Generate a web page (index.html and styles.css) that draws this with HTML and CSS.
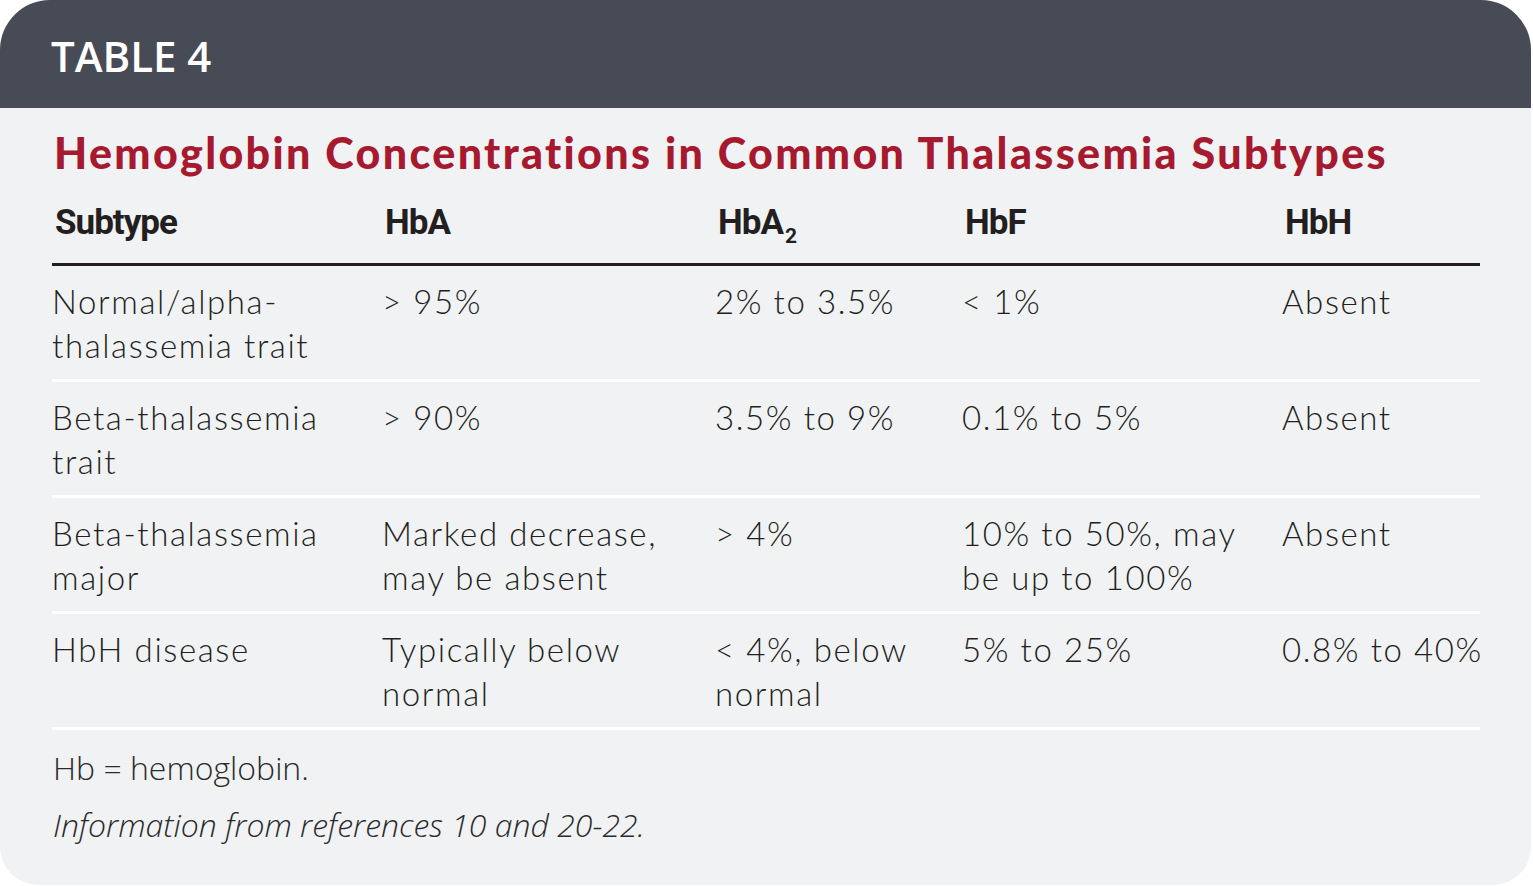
FILE: index.html
```html
<!DOCTYPE html>
<html lang="en">
<head>
<meta charset="utf-8">
<title>Table 4</title>
<link rel="stylesheet" href="styles.css">
</head>
<body>
<div class="card">
  <div class="card-head">TABLE 4</div>
  <div class="card-body">
    <h1 class="title">Hemoglobin Concentrations in Common Thalassemia Subtypes</h1>
    <div class="grid">
      <div class="row head">
        <div class="cell">Subtype</div>
        <div class="cell">HbA</div>
        <div class="cell">HbA<sub>2</sub></div>
        <div class="cell">HbF</div>
        <div class="cell">HbH</div>
      </div>
      <div class="row">
        <div class="cell">Normal/alpha-<br>thalassemia trait</div>
        <div class="cell">&gt; 95%</div>
        <div class="cell">2% to 3.5%</div>
        <div class="cell">&lt; 1%</div>
        <div class="cell">Absent</div>
      </div>
      <div class="row">
        <div class="cell">Beta-thalassemia<br>trait</div>
        <div class="cell">&gt; 90%</div>
        <div class="cell">3.5% to 9%</div>
        <div class="cell">0.1% to 5%</div>
        <div class="cell">Absent</div>
      </div>
      <div class="row">
        <div class="cell">Beta-thalassemia<br>major</div>
        <div class="cell">Marked decrease,<br>may be absent</div>
        <div class="cell">&gt; 4%</div>
        <div class="cell">10% to 50%, may<br>be up to 100%</div>
        <div class="cell">Absent</div>
      </div>
      <div class="row">
        <div class="cell">HbH disease</div>
        <div class="cell">Typically below<br>normal</div>
        <div class="cell">&lt; 4%, below<br>normal</div>
        <div class="cell">5% to 25%</div>
        <div class="cell">0.8% to 40%</div>
      </div>
    </div>
    <p class="note">Hb = hemoglobin.</p>
    <p class="note source">Information from references 10 and 20-22.</p>
  </div>
</div>
</body>
</html>
```

FILE: styles.css
```css
html, body {
  margin: 0;
  padding: 0;
  background: #ffffff;
}

.card {
  width: 1531px;
  height: 885px;
  background: #f1f2f4;
  border-radius: 50px 50px 38px 38px;
  overflow: hidden;
}

.card-head {
  height: 108px;
  background: #474b55;
  color: #ffffff;
  display: flex;
  align-items: center;
  padding-left: 51px;
  padding-top: 2px;
  box-sizing: border-box;
  font-family: "Open Sans", "DejaVu Sans", sans-serif;
  font-weight: 600;
  font-size: 42px;
  letter-spacing: 0;
}

.card-body {
  padding: 0 51px 0 52px;
}

.title {
  margin: 20px 0 0 2px;
  font-family: Lato, "DejaVu Sans", sans-serif;
  font-weight: 900;
  font-size: 43px;
  line-height: 50px;
  color: #a6192e;
  letter-spacing: 2.35px;
  white-space: nowrap;
}

.grid {
  margin-top: 25px;
}

.row {
  display: grid;
  grid-template-columns: 330px 333px 247px 320px 198px;
  height: 116px;
  box-sizing: border-box;
  padding-top: 13px;
  border-bottom: 3px solid #ffffff;
  font-family: Lato, "DejaVu Sans", sans-serif;
  font-weight: 300;
  font-size: 33px;
  line-height: 44px;
  letter-spacing: 1.6px;
  color: #231f20;
}

.row.head {
  height: 63px;
  padding-top: 0;
  border-bottom: 3px solid #231f20;
  font-family: Roboto, "DejaVu Sans Condensed", sans-serif;
  font-weight: 700;
  font-size: 35px;
  line-height: 40px;
  letter-spacing: -1px;
}

.row.head .cell {
  padding-left: 3px;
}

.row .cell {
  white-space: nowrap;
}

.row.head sub {
  font-size: 21px;
  line-height: 0;
  vertical-align: -9px;
  margin-left: 2px;
  letter-spacing: 0;
}

.note {
  margin: 18px 0 0 1px;
  font-family: "Open Sans", "DejaVu Sans", sans-serif;
  font-weight: 300;
  font-size: 32px;
  line-height: 40px;
  color: #2b2b2b;
}

.note.source {
  margin-top: 17px;
  font-style: italic;
}
```
